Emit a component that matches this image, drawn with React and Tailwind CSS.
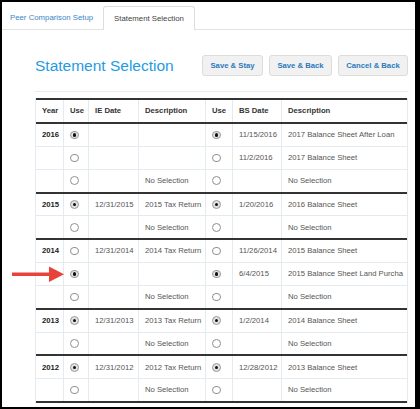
import React from "react";

const cols = [
  "w-[28px]",
  "w-[25px]",
  "w-[50px]",
  "w-[67px]",
  "w-[27px]",
  "w-[49px]",
  "w-[127px]",
];

const groups = [
  [
    ["2016", true, "", "", true, "11/15/2016", "2017 Balance Sheet After Loan"],
    ["", false, "", "", false, "11/2/2016", "2017 Balance Sheet"],
    ["", false, "", "No Selection", false, "", "No Selection"],
  ],
  [
    ["2015", true, "12/31/2015", "2015 Tax Return", true, "1/20/2016", "2016 Balance Sheet"],
    ["", false, "", "No Selection", false, "", "No Selection"],
  ],
  [
    ["2014", false, "12/31/2014", "2014 Tax Return", false, "11/26/2014", "2015 Balance Sheet"],
    ["", true, "", "", true, "6/4/2015", "2015 Balance Sheet Land Purcha"],
    ["", false, "", "No Selection", false, "", "No Selection"],
  ],
  [
    ["2013", true, "12/31/2013", "2013 Tax Return", true, "1/2/2014", "2014 Balance Sheet"],
    ["", false, "", "No Selection", false, "", "No Selection"],
  ],
  [
    ["2012", true, "12/31/2012", "2012 Tax Return", true, "12/28/2012", "2013 Balance Sheet"],
    ["", false, "", "No Selection", false, "", "No Selection"],
  ],
];

function Radio({ checked }) {
  return checked ? (
    <span className="flex w-[8.5px] h-[8.5px] rounded-full border border-[#9a9a9a] bg-[#e2e2e2] items-center justify-center">
      <span className="w-[3.5px] h-[3.5px] rounded-full bg-[#111]" />
    </span>
  ) : (
    <span className="block w-[8.5px] h-[8.5px] rounded-full border border-[#8f8f8f] bg-white" />
  );
}

function Cell({ i, children, className = "" }) {
  const last = i === cols.length - 1;
  return (
    <div
      className={`${cols[i]} shrink-0 h-full flex items-center px-[6px] overflow-hidden whitespace-nowrap ${
        last ? "" : "border-r border-[#e4eaed]"
      } ${className}`}
    >
      {children}
    </div>
  );
}

export default function App() {
  return (
    <div
      className="relative w-[420px] h-[409px] bg-white border-l-2 border-t-2 border-b-2 border-r-[5px] border-black overflow-hidden"
      style={{ fontFamily: '"Liberation Sans", Arial, sans-serif' }}
    >
      {/* Tabs */}
      <div className="flex items-end h-[28px] border-b border-[#e3e3e3]">
        <div className="ml-[8px] w-[93px] h-[23px] flex items-center text-[7.8px] text-[#3a86c6]">
          Peer Comparison Setup
        </div>
        <div className="w-[92px] h-[24px] -mb-px flex items-center justify-center bg-white border border-b-0 border-[#dddddd] rounded-t-[3px] text-[7.8px] text-[#444]">
          Statement Selection
        </div>
      </div>

      {/* Content */}
      <div className="pl-[33px] pr-[7px] pt-[25px]">
        <div className="pb-[15px] border-b border-[#ececec]">
          <div className="flex items-center justify-between h-[21px]">
            <div className="text-[15.5px] leading-none text-[#1f9be3]">Statement Selection</div>
            <div className="flex gap-[6px]">
              <button className="w-[61px] h-[21px] rounded-[3px] border border-[#dcdcdc] bg-[#f1f1f1] text-[7.7px] font-bold text-[#2b7bbd]">
                Save &amp; Stay
              </button>
              <button className="w-[63px] h-[21px] rounded-[3px] border border-[#dcdcdc] bg-[#f1f1f1] text-[7.7px] font-bold text-[#2b7bbd]">
                Save &amp; Back
              </button>
              <button className="w-[70px] h-[21px] rounded-[3px] border border-[#dcdcdc] bg-[#f1f1f1] text-[7.7px] font-bold text-[#2b7bbd]">
                Cancel &amp; Back
              </button>
            </div>
          </div>
        </div>

        {/* Table */}
        <div className="mt-[6px] w-[373px] border-x border-[#e4eaed] text-[7.7px] text-[#555]">
          <div className="flex h-[26px] border-y-2 border-[#333] font-bold text-[#333]">
            <Cell i={0}>Year</Cell>
            <Cell i={1}>Use</Cell>
            <Cell i={2}>IE Date</Cell>
            <Cell i={3}>Description</Cell>
            <Cell i={4}>Use</Cell>
            <Cell i={5}>BS Date</Cell>
            <Cell i={6}>Description</Cell>
          </div>
          {groups.map((g, gi) =>
            g.map((r, ri) => {
              const lastRow = ri === g.length - 1;
              return (
                <div
                  key={`${gi}-${ri}`}
                  className={`flex ${
                    lastRow ? "h-[23.85px] border-b-2 border-[#333]" : "h-[22.85px] border-b border-[#e4eaed]"
                  }`}
                >
                  <Cell i={0} className="font-bold text-[#222]">{r[0]}</Cell>
                  <Cell i={1}>
                    <Radio checked={r[1]} />
                  </Cell>
                  <Cell i={2}>{r[2]}</Cell>
                  <Cell i={3}>{r[3]}</Cell>
                  <Cell i={4}>
                    <Radio checked={r[4]} />
                  </Cell>
                  <Cell i={5}>{r[5]}</Cell>
                  <Cell i={6}>{r[6]}</Cell>
                </div>
              );
            })
          )}
        </div>
      </div>

      {/* Red arrow overlay */}
      <svg
        className="absolute left-[10px] top-[264px]"
        width="54"
        height="16"
        viewBox="0 0 54 16"
      >
        <rect x="0" y="6.5" width="40" height="3.5" fill="#e8423b" />
        <polygon points="37,0.5 52,8.25 37,16" fill="#e8423b" />
      </svg>
    </div>
  );
}
